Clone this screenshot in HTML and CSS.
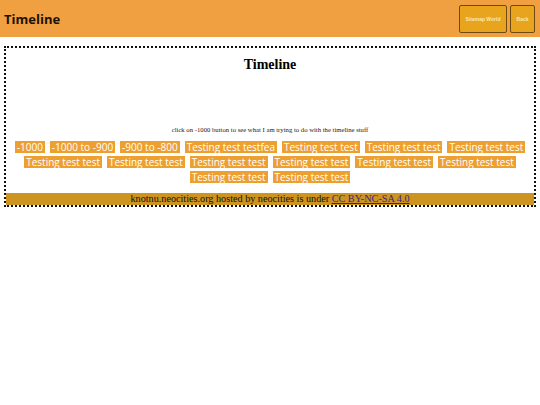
FILE: index.html
```html
<!DOCTYPE html>
<html>
<head>
<meta charset="utf-8">
<title>Timeline</title>
<link rel="stylesheet" href="styles.css">
</head>
<body>
<header class="topbar">
  <h1 class="title">Timeline</h1>
  <nav class="nav">
    <a class="navbtn wide" href="#">Sitemap World</a>
    <a class="navbtn" href="#">Back</a>
  </nav>
</header>
<main class="frame">
  <h2 class="heading">Timeline</h2>
  <p class="hint">click on -1000 button to see what I am trying to do with the timeline stuff</p>
  <div class="buttons">
    <button class="tbtn">-1000</button>
    <button class="tbtn">-1000 to -900</button>
    <button class="tbtn">-900 to -800</button>
    <button class="tbtn">Testing test testfea</button>
    <button class="tbtn">Testing test test</button>
    <button class="tbtn">Testing test test</button>
    <button class="tbtn">Testing test test</button>
    <button class="tbtn">Testing test test</button>
    <button class="tbtn">Testing test test</button>
    <button class="tbtn">Testing test test</button>
    <button class="tbtn">Testing test test</button>
    <button class="tbtn">Testing test test</button>
    <button class="tbtn">Testing test test</button>
    <button class="tbtn">Testing test test</button>
    <button class="tbtn">Testing test test</button>
  </div>
  <footer class="foot">knotnu.neocities.org hosted by neocities is under <a class="lic" href="#">CC BY-NC-SA 4.0</a></footer>
</main>
</body>
</html>
```
FILE: styles.css
```css
html, body {
  margin: 0;
  padding: 0;
  background: #ffffff;
}
.topbar {
  height: 37px;
  background: #f0a040;
  display: flex;
  align-items: center;
  justify-content: space-between;
  padding: 0 5px 0 4px;
}
.title {
  margin: 0;
  font-family: "Open Sans", sans-serif;
  font-weight: 700;
  font-size: 13px;
  color: #1a1208;
}
.nav {
  display: flex;
  gap: 3px;
}
.navbtn {
  display: flex;
  align-items: center;
  justify-content: center;
  height: 26px;
  width: 23px;
  background: #e8a41c;
  border: 1px solid #6e4a10;
  border-radius: 2px;
  color: #fbe9b0;
  font-family: "Liberation Sans", sans-serif;
  font-weight: 700;
  font-size: 5px;
  text-decoration: none;
}
.navbtn.wide {
  width: 46px;
}
.frame {
  margin: 9px 4px 0;
  border: 2px dotted #111;
  text-align: center;
  font-family: "Liberation Serif", serif;
}
.heading {
  margin: 8px 0 0;
  font-size: 14px;
  line-height: 17px;
  font-weight: 700;
}
.hint {
  margin: 52px 0 0;
  font-size: 6.7px;
  line-height: 9px;
  color: #222;
}
.buttons {
  margin: 7px 6px 0;
  display: flex;
  flex-wrap: wrap;
  justify-content: center;
  gap: 3px 5px;
}
.tbtn {
  background: #eda030;
  border: 0;
  padding: 0 2px;
  height: 12px;
  color: #ffffff;
  font-family: "Open Sans", sans-serif;
  font-size: 10px;
  line-height: 12px;
}
.foot {
  margin-top: 10px;
  background: #cd951f;
  color: #111;
  font-size: 10.2px;
  line-height: 12px;
}
.lic {
  color: #3a1d8c;
  text-decoration: underline;
}
```
